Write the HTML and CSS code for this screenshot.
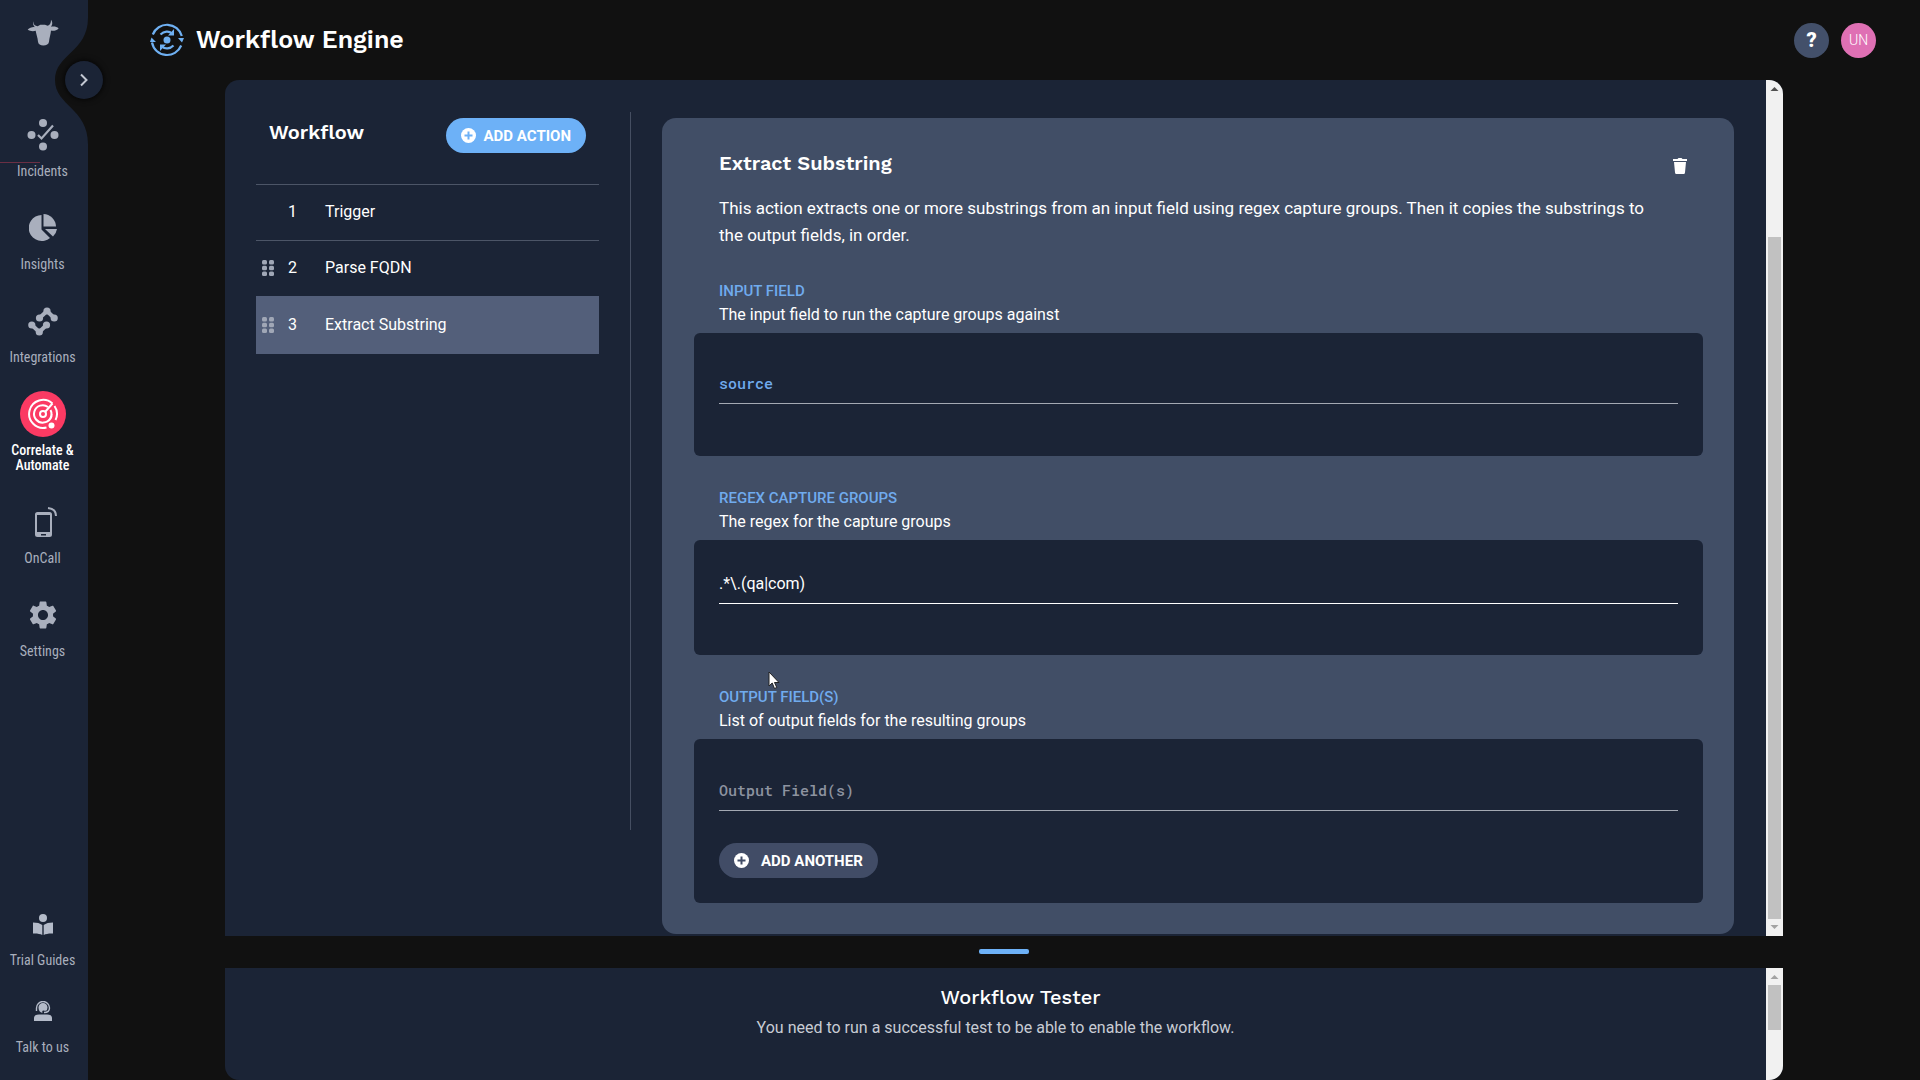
FILE: index.html
```html
<!DOCTYPE html>
<html lang="en">
<head>
<meta charset="utf-8">
<meta name="viewport" content="width=device-width, initial-scale=1">
<title>Workflow Engine</title>
<link rel="stylesheet" href="styles.css">
</head>
<body class="app">
<nav class="sidebar" aria-label="Main">
  <svg class="sidebar-notch" width="33" height="126" viewBox="0 0 33 126" aria-hidden="true"><path d="M33 0C33 34 0 36 0 62C0 88 33 90 33 126Z"/></svg>
  <button class="sidebar-toggle" type="button" aria-label="Expand menu">
    <svg width="10" height="14" viewBox="0 0 10 14" fill="none" stroke="#c3c8d2" stroke-width="2"><path d="M2 1.500L7.500 7L2 12.500"/></svg>
  </button>
  <a class="logo" href="#" aria-label="Home">
    <svg width="32" height="27" viewBox="48 30 96 80" fill="#a9afbd"><path d="M67 36C67 46 72 50 80 51L88 47H102L110 50C117 48 120 42 120 32C126 40 124 48 120 53C128 51 138 53 143 57C138 64 126 66 120 64C119 76 115 86 114 98C113 106 106 109 97 109C88 109 82 106 81 98C80 86 76 76 74 65C66 68 56 66 50 62C56 55 64 53 72 54C67 49 65 43 67 36Z"/></svg>
  </a>
  <ul class="nav-list">
    <li><a class="nav-item nav-marked" href="#">
      <span class="nav-icon"><svg width="32" height="32" viewBox="0 0 32 32" fill="#a9afbd"><circle cx="16" cy="4" r="4"/><circle cx="4.500" cy="16" r="4"/><circle cx="27.500" cy="16" r="4"/><circle cx="16" cy="27.500" r="4"/><path d="M11 16L14.500 19.500L26 6.500" fill="none" stroke="#a9afbd" stroke-width="2.200"/></svg></span>
      <span class="nav-label">Incidents</span></a></li>
    <li><a class="nav-item" href="#">
      <span class="nav-icon"><svg width="28" height="28" viewBox="0 0 28 28" fill="#a9afbd"><path d="M12.500 1A13 13 0 1 0 21 24L12.500 15.500Z"/><path d="M14.500 0A13 13 0 0 1 27 12.500H14.500Z"/><path d="M16 15H28A13 13 0 0 1 24 22.500Z"/></svg></span>
      <span class="nav-label">Insights</span></a></li>
    <li><a class="nav-item" href="#">
      <span class="nav-icon"><svg width="30" height="29" viewBox="0 0 30 29" fill="#a9afbd"><circle cx="19" cy="4" r="3.600"/><circle cx="11.500" cy="11" r="3.600"/><circle cx="26.200" cy="11" r="3.600"/><circle cx="3.800" cy="18" r="3.600"/><circle cx="18.500" cy="18" r="3.600"/><circle cx="11.300" cy="25" r="3.600"/><path d="M11.500 11L19 4L26.200 11M3.800 18L11.300 25L18.500 18" fill="none" stroke="#a9afbd" stroke-width="4"/></svg></span>
      <span class="nav-label">Integrations</span></a></li>
    <li><a class="nav-item nav-item-active" href="#" aria-current="page">
      <span class="nav-icon nav-icon-active"><svg width="32" height="32" viewBox="0 0 32 32" fill="none" stroke="#fff" stroke-width="2"><path d="M25.500 5.500A14 14 0 1 0 19.500 29.500M27.500 8A14 14 0 0 1 28.500 22"/><path d="M21 9A8.700 8.700 0 1 0 23.500 12M20 23.700A8.700 8.700 0 0 0 24.700 16"/><circle cx="16" cy="16" r="3"/><path d="M18 14L25.500 5.500"/><circle cx="24.500" cy="27.500" r="3" fill="#fff" stroke="none"/></svg></span>
      <span class="nav-label">Correlate &amp; Automate</span></a></li>
    <li><a class="nav-item" href="#">
      <span class="nav-icon"><svg width="28" height="32" viewBox="0 0 28 32" fill="#a9afbd"><path fill-rule="evenodd" d="M8.500 6H20.500A2.500 2.500 0 0 1 23 8.500V28.500A2.500 2.500 0 0 1 20.500 31H8.500A2.500 2.500 0 0 1 6 28.500V8.500A2.500 2.500 0 0 1 8.500 6ZM8 9V26H21V9ZM12 28V29.500H17V28Z"/><path d="M19 2C24 2.500 27 5 27 10" fill="none" stroke="#a9afbd" stroke-width="2"/></svg></span>
      <span class="nav-label">OnCall</span></a></li>
    <li><a class="nav-item" href="#">
      <span class="nav-icon"><svg width="28" height="28" viewBox="2 2 20 20" fill="#a9afbd"><path d="M19.140 12.940c.04-.3.060-.610.060-.940 0-.320-.020-.640-.070-.940l2.030-1.580c.18-.14.230-.41.120-.610l-1.920-3.320c-.12-.22-.37-.29-.59-.22l-2.390.960c-.5-.38-1.030-.7-1.620-.94l-.36-2.540c-.04-.24-.24-.41-.48-.41h-3.840c-.24 0-.43.170-.47.410l-.36 2.540c-.59.240-1.130.570-1.620.94l-2.390-.96c-.22-.08-.47 0-.59.220L2.740 8.870c-.12.210-.08.470.12.610l2.030 1.580c-.05.300-.09.630-.09.940s.02.640.07.940l-2.030 1.580c-.18.140-.23.410-.12.610l1.920 3.320c.12.220.37.290.59.220l2.390-.96c.5.380 1.030.7 1.620.94l.36 2.540c.05.240.24.410.48.410h3.840c.24 0 .44-.17.47-.41l.36-2.540c.59-.24 1.130-.56 1.620-.94l2.390.960c.22.080.47 0 .59-.22l1.920-3.320c.12-.22.070-.47-.12-.61l-2.010-1.580zM12 15.600c-1.980 0-3.600-1.620-3.600-3.600s1.620-3.600 3.600-3.600 3.600 1.620 3.600 3.600-1.620 3.600-3.600 3.600z"/></svg></span>
      <span class="nav-label">Settings</span></a></li>
  </ul>
  <ul class="nav-list nav-list-foot">
    <li><a class="nav-item" href="#">
      <span class="nav-icon"><svg width="20" height="21" viewBox="0 0 20 21" fill="#b4bbc9"><circle cx="10" cy="4" r="4"/><path d="M0 8.500C4 8.500 7 9.300 9.300 11V21C7 19.800 4 19.300 0 19.500ZM20 8.500C16 8.500 13 9.300 10.700 11V21C13 19.800 16 19.300 20 19.500Z"/></svg></span>
      <span class="nav-label">Trial Guides</span></a></li>
    <li><a class="nav-item" href="#">
      <span class="nav-icon"><svg width="18" height="20" viewBox="0 0 18 20" fill="#b4bbc9"><path d="M2.500 10V7A6.500 6.500 0 0 1 15.500 7C15.500 10 14 11.500 10 11.500" fill="none" stroke="#b4bbc9" stroke-width="1.400"/><path d="M4.500 6.500A4.500 4.500 0 0 1 13.500 6.500L13 9C12 10 11 10 9.500 9.500C8 9.500 8 11 8.500 12C6 11.500 4.500 9.500 4.500 6.500Z"/><path d="M0 20V17C0 14.500 2 13.500 5 13.500H13C16 13.500 18 14.500 18 17V20Z"/></svg></span>
      <span class="nav-label">Talk to us</span></a></li>
  </ul>
</nav>

<div class="page">
  <header class="topbar">
    <svg class="topbar-icon" width="34" height="34" viewBox="0 0 34 34" fill="none" stroke="#6fb0f2" stroke-width="2.200" aria-hidden="true"><path d="M2.800 11.500A15.300 15.300 0 0 1 31.800 13M31.200 22.500A15.300 15.300 0 0 1 2 19.500"/><path d="M0 19L1.500 14.500L6 19ZM28 15L32 19.500L34 15Z" fill="#6fb0f2" stroke="none"/><path d="M10.500 11.500C14 8 19 7.500 22 10.500M23.500 22.500C20 26 15 26.500 12 23.500"/><path d="M24 6V12.500H18ZM10 28V21.500H16Z" fill="#6fb0f2" stroke="none"/><circle cx="17" cy="17" r="3.500" fill="#6fb0f2" stroke="none"/></svg>
    <h1 class="topbar-title">Workflow Engine</h1>
    <button class="round-button round-help" type="button" aria-label="Help">?</button>
    <button class="round-button round-user" type="button" aria-label="User menu">UN</button>
  </header>

  <main class="workspace">
    <section class="panel panel-top">
      <div class="editor">
        <div class="steps">
          <div class="steps-head">
            <h2 class="heading">Workflow</h2>
            <button class="pill pill-primary" type="button"><svg width="15" height="15" viewBox="0 0 15 15"><circle cx="7.500" cy="7.500" r="7.500" fill="#fff"/><path d="M7.500 3.500V11.500M3.500 7.500H11.500" stroke="#6db1f7" stroke-width="2"/></svg>ADD ACTION</button>
          </div>
          <ol class="step-list">
            <li class="step"><span class="step-grip"></span><span>1</span><span>Trigger</span></li>
            <li class="step"><span class="step-grip"><svg width="12" height="16" viewBox="0 0 12 16" fill="#a0a7b6"><rect width="5" height="4.500" rx="1.500"/><rect x="7" width="5" height="4.500" rx="1.500"/><rect y="5.750" width="5" height="4.500" rx="1.500"/><rect x="7" y="5.750" width="5" height="4.500" rx="1.500"/><rect y="11.500" width="5" height="4.500" rx="1.500"/><rect x="7" y="11.500" width="5" height="4.500" rx="1.500"/></svg></span><span>2</span><span>Parse FQDN</span></li>
            <li class="step step-active"><span class="step-grip"><svg width="12" height="16" viewBox="0 0 12 16" fill="#a0a7b6"><rect width="5" height="4.500" rx="1.500"/><rect x="7" width="5" height="4.500" rx="1.500"/><rect y="5.750" width="5" height="4.500" rx="1.500"/><rect x="7" y="5.750" width="5" height="4.500" rx="1.500"/><rect y="11.500" width="5" height="4.500" rx="1.500"/><rect x="7" y="11.500" width="5" height="4.500" rx="1.500"/></svg></span><span>3</span><span>Extract Substring</span></li>
          </ol>
        </div>

        <form class="card">
          <div class="card-head">
            <h2 class="heading">Extract Substring</h2>
            <button class="delete" type="button" aria-label="Delete action"><svg width="14" height="16" viewBox="0 0 14 16" fill="#fff"><path d="M4.500 1L5.500 0H8.500L9.500 1H14V3H0V1ZM1 4H13L12 14.500A1.500 1.500 0 0 1 10.500 16H3.500A1.500 1.500 0 0 1 2 14.500Z"/></svg></button>
          </div>
          <p class="card-text">This action extracts one or more substrings from an input field using regex capture groups. Then it copies the substrings to the output fields, in order.</p>

          <div class="field">
            <label class="field-label" for="input-field">INPUT FIELD</label>
            <p class="field-hint">The input field to run the capture groups against</p>
            <div class="field-box">
              <input class="line-input line-input-code" id="input-field" type="text" value="source">
            </div>
          </div>
          <div class="field">
            <label class="field-label" for="regex-field">REGEX CAPTURE GROUPS</label>
            <p class="field-hint">The regex for the capture groups</p>
            <div class="field-box field-box-tight">
              <input class="line-input line-input-bright" id="regex-field" type="text" value=".*\.(qa|com)">
            </div>
          </div>
          <div class="field">
            <label class="field-label" for="output-field">OUTPUT FIELD(S)</label>
            <p class="field-hint">List of output fields for the resulting groups</p>
            <div class="field-box field-box-list">
              <input class="line-input line-input-code" id="output-field" type="text" placeholder="Output Field(s)">
              <button class="pill pill-muted" type="button"><svg width="15" height="15" viewBox="0 0 15 15"><circle cx="7.500" cy="7.500" r="7.500" fill="#fff"/><path d="M7.500 3.500V11.500M3.500 7.500H11.500" stroke="#414c66" stroke-width="2"/></svg>ADD ANOTHER</button>
            </div>
          </div>
        </form>
      </div>
      <div class="scrollbar" aria-hidden="true">
        <svg class="scroll-arrow" width="17" height="17" viewBox="0 0 17 17" fill="#505050"><path d="M4.500 11L8.500 7L12.500 11Z"/></svg>
        <div class="scroll-track"><div class="scroll-thumb scroll-thumb-end"></div></div>
        <svg class="scroll-arrow" width="17" height="17" viewBox="0 0 17 17" fill="#a3a3a3"><path d="M4.500 6H12.500L8.500 10Z"/></svg>
      </div>
    </section>

    <div class="splitter"><div class="splitter-handle"></div></div>

    <section class="panel panel-bottom">
      <div class="tester">
        <h2 class="tester-title">Workflow Tester</h2>
        <p class="tester-text">You need to run a successful test to be able to enable the workflow.</p>
      </div>
      <div class="scrollbar" aria-hidden="true">
        <svg class="scroll-arrow" width="17" height="17" viewBox="0 0 17 17" fill="#a3a3a3"><path d="M4.500 11L8.500 7L12.500 11Z"/></svg>
        <div class="scroll-track"><div class="scroll-thumb scroll-thumb-start"></div></div>
      </div>
    </section>
  </main>
</div>

<svg class="pointer" width="12" height="19" viewBox="0 0 12 19" fill="#fff" stroke="#222" aria-hidden="true"><path d="M1 1V15L4.200 12L6.500 17.500L8.800 16.500L6.500 11.500H11Z"/></svg>
</body>
</html>
```
FILE: styles.css
```css
:root {
  --page: #111;
  --panel: #1b2436;
  --card: #414e66;
  --blue: #6db1f7;
  --sans: Roboto, "Liberation Sans", sans-serif;
  --head: "Work Sans", Inter, sans-serif;
  --narrow: "Roboto Condensed", "Liberation Sans Narrow", sans-serif;
  --mono: "Roboto Mono", "Liberation Mono", monospace;
}

* { box-sizing: border-box; }

h1, h2, p, ul, ol { margin: 0; padding: 0; }
ul, ol { list-style: none; }
svg { display: block; }

button {
  border: 0;
  padding: 0;
  color: #fff;
  font-family: var(--sans);
  cursor: pointer;
}

.app {
  display: flex;
  min-height: 100vh;
  margin: 0;
  background: var(--page);
  color: #fff;
  font: 16px/24px var(--sans);
}

/* Sidebar */
.sidebar {
  position: relative;
  display: flex;
  flex: none;
  flex-direction: column;
  width: 88px;
  padding: 19px 3px 25px 0;
  background: var(--panel);
}

.sidebar-notch {
  position: absolute;
  top: 18px;
  right: 0;
  fill: var(--page);
}

.sidebar-toggle {
  position: absolute;
  top: 61px;
  right: -15px;
  display: grid;
  place-items: center;
  width: 38px;
  height: 38px;
  border-radius: 50%;
  background: var(--panel);
  box-shadow: 0 0 6px #000;
}

.logo {
  align-self: center;
  height: 27px;
}

.nav-list {
  display: flex;
  flex-direction: column;
  gap: 26px;
  margin-top: 66px;
}

.nav-list-foot {
  gap: 20px;
  margin-top: auto;
}

.nav-item {
  position: relative;
  display: flex;
  flex-direction: column;
  align-items: center;
  gap: 6px;
  color: #a9afbd;
  text-decoration: none;
}

.nav-item-active { color: #fff; font-weight: 500; }

.nav-marked::before {
  content: "";
  position: absolute;
  top: 50px;
  left: 0;
  width: 40px;
  height: 1px;
  background: #6b2f44;
}

.nav-icon {
  display: grid;
  place-items: center;
  width: 46px;
  height: 46px;
  border-radius: 50%;
}

.nav-icon-active { background: #fb3a63; }

.nav-label {
  max-width: 72px;
  font-family: var(--narrow);
  font-size: 14px;
  line-height: 15px;
  text-align: center;
}

/* Page */
.page {
  display: flex;
  flex: 1;
  flex-direction: column;
  min-width: 0;
}

.topbar {
  display: flex;
  align-items: center;
  gap: 12px;
  height: 80px;
  padding: 0 44px 0 62px;
}

.topbar-title {
  flex: 1;
  font: 600 25px/32px var(--head);
}

.round-button {
  width: 35px;
  height: 35px;
  border-radius: 50%;
}

.round-help {
  background: #43506a;
  font-size: 20px;
  font-weight: 900;
}

.round-user {
  background: #df70b4;
  font-size: 14px;
  font-weight: 300;
}

.workspace {
  display: flex;
  flex: 1;
  flex-direction: column;
  margin: 0 137px;
}

.panel {
  display: flex;
  overflow: hidden;
  background: var(--panel);
}

.panel-top { border-radius: 14px 14px 0 0; }

.panel-bottom {
  flex: 1;
  border-radius: 0 0 14px 14px;
}

.editor {
  display: flex;
  flex: 1;
  align-items: flex-start;
  min-width: 0;
  padding: 32px 32px 2px 31px;
}

.heading {
  font: 600 20px/24px var(--head);
}

/* Step list */
.steps {
  flex: none;
  width: 375px;
  min-height: 718px;
  padding-right: 31px;
  border-right: 1px solid #454e61;
}

.steps-head {
  display: flex;
  justify-content: space-between;
  align-items: flex-start;
  height: 72px;
  padding: 6px 13px 0;
}

.steps-head .heading { margin-top: 2px; }

.pill {
  display: inline-flex;
  align-items: center;
  height: 35px;
  padding: 0 15px;
  border-radius: 18px;
  font-size: 15px;
  font-weight: 700;
}

.pill-primary { gap: 8px; background: var(--blue); }
.pill-muted { gap: 12px; background: #414c66; }

.step {
  display: grid;
  grid-template-columns: 26px 37px 1fr;
  align-items: center;
  height: 56px;
  padding: 0 0 2px 6px;
  border-top: 1px solid #4c5567;
}

.step-active {
  height: 58px;
  border-color: #535f7a;
  background: #535f7a;
}

/* Action card */
.card {
  flex: 1;
  min-width: 0;
  margin: 6px 0 0 31px;
  padding: 33px 31px 31px 32px;
  border-radius: 14px;
  background: var(--card);
}

.card-head {
  display: flex;
  justify-content: space-between;
  align-items: center;
  height: 24px;
  padding: 0 16px 0 25px;
}

.delete {
  padding: 6px 0 0;
  background: none;
}

.card-text {
  margin-top: 20px;
  padding: 0 48px 0 25px;
  font-size: 17px;
  line-height: 27px;
}

.field { margin-top: 30px; }

.field-label {
  display: block;
  padding-left: 25px;
  color: #70abee;
  font-size: 15px;
  font-weight: 500;
}

.field-hint { padding-left: 25px; }

.field-box {
  margin-top: 6px;
  padding: 32px 25px 52px;
  border-radius: 6px;
  background: var(--panel);
}

.field-box-tight { padding: 25px 25px 51px; }
.field-box-list { padding: 33px 25px 25px; }

.line-input {
  display: block;
  width: 100%;
  height: 39px;
  padding: 0 0 2px;
  border: 0;
  border-bottom: 1px solid #a4a9b3;
  outline: 0;
  background: none;
  color: #fff;
  font: 16px/24px var(--sans);
}

.line-input-bright { border-color: #fff; }

.line-input-code {
  color: #70abee;
  font: 500 15px/24px var(--mono);
}

.line-input::placeholder { color: #8d93a0; opacity: 1; }

.pill-muted { margin-top: 32px; }

/* Splitter and tester */
.splitter {
  display: grid;
  place-items: center;
  height: 32px;
  padding-bottom: 1px;
}

.splitter-handle {
  width: 50px;
  height: 5px;
  border-radius: 2px;
  background: var(--blue);
}

.tester {
  flex: 1;
  min-height: 112px;
  padding-top: 17px;
  text-align: center;
}

.tester-title {
  padding-left: 50px;
  font: 500 20px/24px var(--head);
}

.tester-text {
  margin-top: 7px;
  color: #c8ccd4;
}

/* Scrollbars */
.scrollbar {
  display: flex;
  flex: none;
  flex-direction: column;
  width: 17px;
  background: #f1f1f1;
}

.scroll-arrow { flex: none; }

.scroll-track {
  display: flex;
  flex: 1;
  flex-direction: column;
  padding: 0 2px;
}

.scroll-thumb { background: #c1c1c1; }
.scroll-thumb-start { height: 45px; }
.scroll-thumb-end { height: 83%; margin-top: auto; }

.pointer {
  position: absolute;
  top: 671px;
  left: 768px;
}
```
